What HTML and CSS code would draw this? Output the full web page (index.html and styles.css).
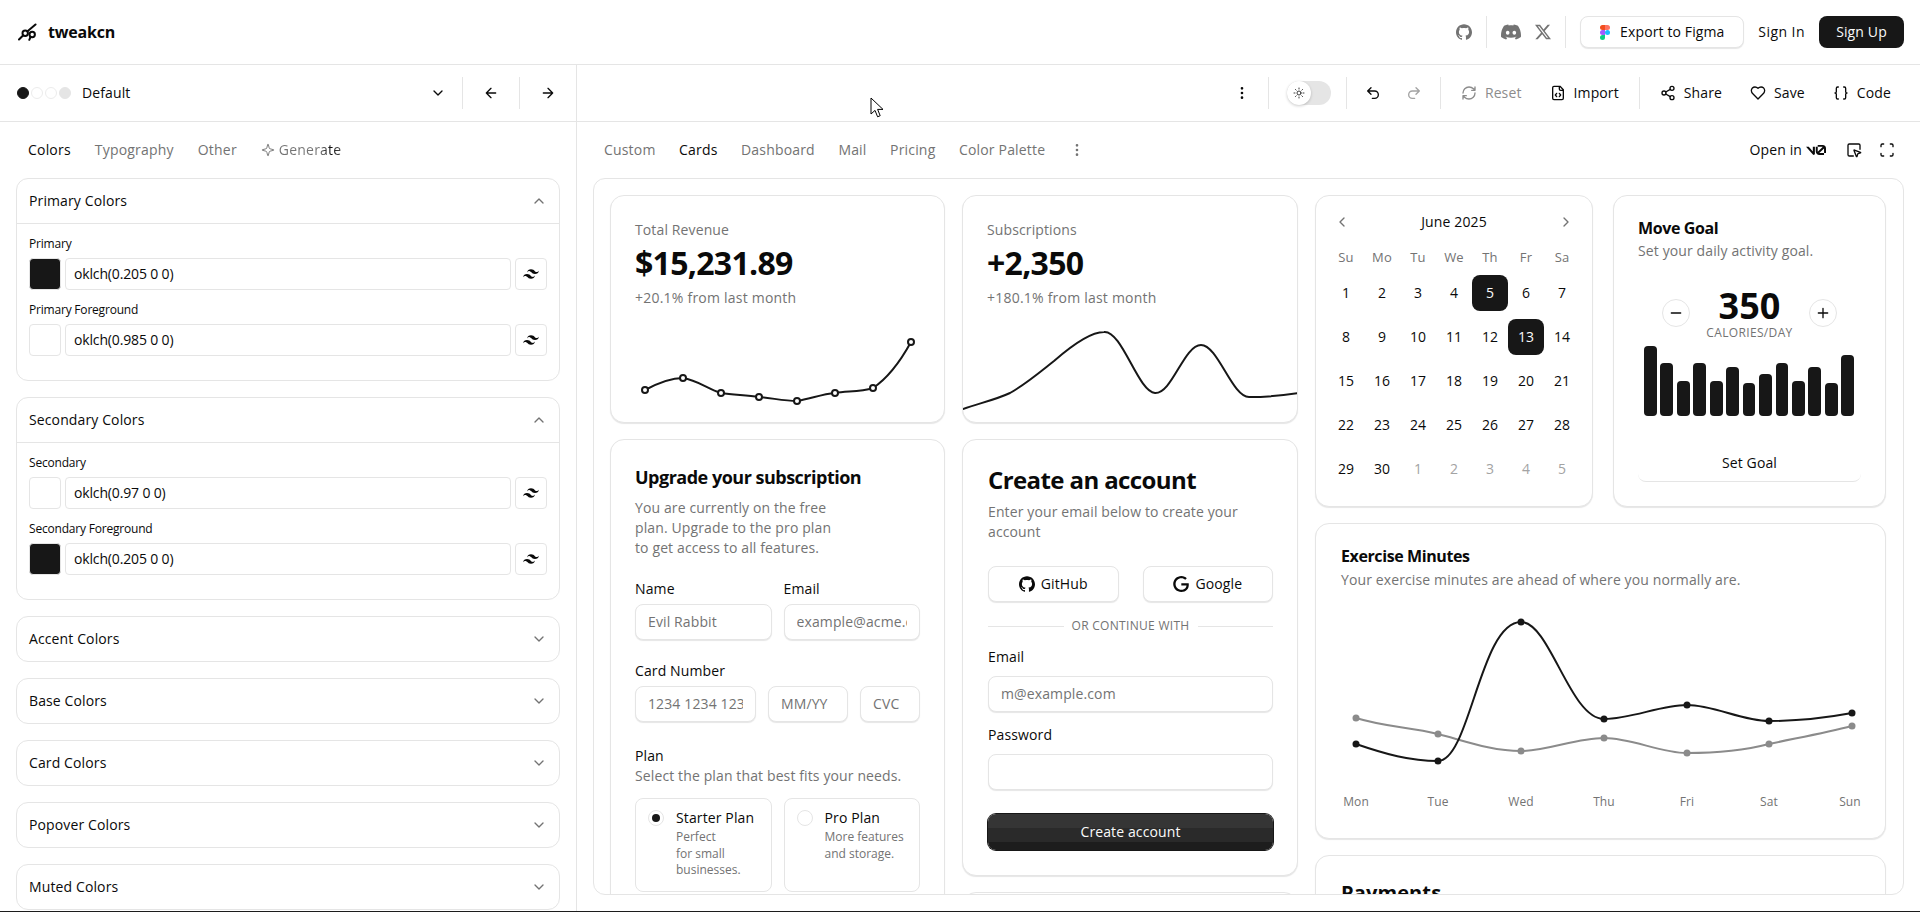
FILE: index.html
```html
<!DOCTYPE html>
<html lang="en">
<head>
    <meta charset="UTF-8">
    <meta name="viewport" content="width=device-width, initial-scale=1.0">
    <title>tweakcn</title>
    <link rel="stylesheet" href="styles.css">
</head>
<body>
    <!-- shared icons -->
    <svg class="icon-defs" aria-hidden="true">
        <symbol id="i-down" viewBox="0 0 24 24"><path d="m6 9 6 6 6-6"/></symbol>
        <symbol id="i-up" viewBox="0 0 24 24"><path d="m18 15-6-6-6 6"/></symbol>
        <symbol id="i-left" viewBox="0 0 24 24"><path d="m15 18-6-6 6-6"/></symbol>
        <symbol id="i-right" viewBox="0 0 24 24"><path d="m9 18 6-6-6-6"/></symbol>
        <symbol id="i-dots" viewBox="0 0 24 24"><circle cx="12" cy="5" r="1"/><circle cx="12" cy="12" r="1"/><circle cx="12" cy="19" r="1"/></symbol>
        <symbol id="i-tailwind" viewBox="0 0 24 24"><path class="solid" d="M12 4.8c-3.2 0-5.2 1.6-6 4.8 1.2-1.6 2.6-2.2 4.2-1.8.913.228 1.565.89 2.288 1.624C13.666 10.618 15.027 12 18 12c3.2 0 5.2-1.6 6-4.8-1.2 1.6-2.6 2.2-4.2 1.8-.913-.228-1.565-.89-2.288-1.624C16.337 6.182 14.976 4.8 12 4.8zM6 12c-3.2 0-5.2 1.6-6 4.8 1.2-1.6 2.6-2.2 4.2-1.8.913.228 1.565.89 2.288 1.624C7.666 17.818 9.027 19.2 12 19.2c3.2 0 5.2-1.6 6-4.8-1.2 1.6-2.6 2.2-4.2 1.8-.913-.228-1.565-.89-2.288-1.624C10.337 13.382 8.976 12 6 12z"/></symbol>
        <symbol id="i-github" viewBox="0 0 24 24"><path class="solid" d="M12 .297c-6.63 0-12 5.373-12 12 0 5.303 3.438 9.8 8.205 11.385.6.113.82-.258.82-.577 0-.285-.01-1.04-.015-2.04-3.338.724-4.042-1.61-4.042-1.61C4.422 18.07 3.633 17.7 3.633 17.7c-1.087-.744.084-.729.084-.729 1.205.084 1.838 1.236 1.838 1.236 1.07 1.835 2.809 1.305 3.495.998.108-.776.417-1.305.76-1.605-2.665-.3-5.466-1.332-5.466-5.93 0-1.31.465-2.38 1.235-3.22-.135-.303-.54-1.523.105-3.176 0 0 1.005-.322 3.3 1.23.96-.267 1.98-.399 3-.405 1.02.006 2.04.138 3 .405 2.28-1.552 3.285-1.23 3.285-1.23.645 1.653.24 2.873.12 3.176.765.84 1.23 1.91 1.23 3.22 0 4.61-2.805 5.625-5.475 5.92.42.36.81 1.096.81 2.22 0 1.606-.015 2.896-.015 3.286 0 .315.21.69.825.57C20.565 22.092 24 17.592 24 12.297c0-6.627-5.373-12-12-12"/></symbol>
    </svg>

    <header class="site-header">
        <a class="brand">
            <svg class="brand-mark" width="20" height="18" viewBox="0 0 20 18"><path d="M17.5 1.5 9.5 8.2M5 12.5 1 16.5M12.5 14l-1.2 2.8"/><circle cx="7.2" cy="10.2" r="2.7"/><circle cx="14.2" cy="11.5" r="2.7"/></svg>
            <span>tweakcn</span>
        </a>
        <div class="header-actions">
            <svg class="social" width="16" height="16"><use href="#i-github"/></svg>
            <span class="divider short"></span>
            <svg class="social discord" width="20" height="20" viewBox="0 0 24 24"><path class="solid" d="M20.317 4.3698a19.7913 19.7913 0 00-4.8851-1.5152.0741.0741 0 00-.0785.0371c-.211.3753-.4447.8648-.6083 1.2495-1.8447-.2762-3.68-.2762-5.4868 0-.1636-.3933-.4058-.8742-.6177-1.2495a.077.077 0 00-.0785-.037 19.7363 19.7363 0 00-4.8852 1.515.0699.0699 0 00-.0321.0277C.5334 9.0458-.319 13.5799.0992 18.0578a.0824.0824 0 00.0312.0561c2.0528 1.5076 4.0413 2.4228 5.9929 3.0294a.0777.0777 0 00.0842-.0276c.4616-.6304.8731-1.2952 1.226-1.9942a.076.076 0 00-.0416-.1057c-.6528-.2476-1.2743-.5495-1.8722-.8923a.077.077 0 01-.0076-.1277c.1258-.0943.2517-.1923.3718-.2914a.0743.0743 0 01.0776-.0105c3.9278 1.7933 8.18 1.7933 12.0614 0a.0739.0739 0 01.0785.0095c.1202.099.246.1981.3728.2924a.077.077 0 01-.0066.1276 12.2986 12.2986 0 01-1.873.8914.0766.0766 0 00-.0407.1067c.3604.698.7719 1.3628 1.225 1.9932a.076.076 0 00.0842.0286c1.961-.6067 3.9495-1.5219 6.0023-3.0294a.077.077 0 00.0313-.0552c.5004-5.177-.8382-9.6739-3.5485-13.6604a.061.061 0 00-.0312-.0286zM8.02 15.3312c-1.1825 0-2.1569-1.0857-2.1569-2.419 0-1.3332.9555-2.4189 2.157-2.4189 1.2108 0 2.1757 1.0952 2.1568 2.419 0 1.3332-.9555 2.4189-2.1569 2.4189zm7.9748 0c-1.1825 0-2.1569-1.0857-2.1569-2.419 0-1.3332.9554-2.4189 2.1569-2.4189 1.2108 0 2.1757 1.0952 2.1568 2.419 0 1.3332-.946 2.4189-2.1568 2.4189Z"/></svg>
            <svg class="social x-logo" width="16" height="16" viewBox="0 0 24 24"><path class="solid" d="M18.901 1.153h3.68l-8.04 9.19L24 22.846h-7.406l-5.8-7.584-6.638 7.584H.474l8.6-9.83L0 1.154h7.594l5.243 6.932ZM17.61 20.644h2.039L6.486 3.24H4.298Z"/></svg>
            <span class="divider short"></span>
            <button class="figma-btn">
                <svg width="10" height="15" viewBox="0 0 38 57"><path fill="#1ABCFE" d="M19 28.5a9.5 9.5 0 1 1 19 0 9.5 9.5 0 0 1-19 0z"/><path fill="#0ACF83" d="M0 47.5A9.5 9.5 0 0 1 9.5 38H19v9.5a9.5 9.5 0 1 1-19 0z"/><path fill="#FF7262" d="M19 0v19h9.5a9.5 9.5 0 1 0 0-19H19z"/><path fill="#F24E1E" d="M0 9.5A9.5 9.5 0 0 0 9.5 19H19V0H9.5A9.5 9.5 0 0 0 0 9.5z"/><path fill="#A259FF" d="M0 28.5A9.5 9.5 0 0 0 9.5 38H19V19H9.5A9.5 9.5 0 0 0 0 28.5z"/></svg>
                Export to Figma
            </button>
            <a class="sign-in">Sign In</a>
            <button class="sign-up">Sign Up</button>
        </div>
    </header>

    <div class="workspace">
        <aside class="sidebar">
            <div class="theme-bar">
                <div class="theme-dots"><i class="dot dark"></i><i class="dot"></i><i class="dot"></i><i class="dot grey"></i></div>
                <span class="theme-name">Default</span>
                <svg class="ico theme-chevron" width="16" height="16"><use href="#i-down"/></svg>
                <span class="divider"></span>
                <svg class="ico theme-arrow" width="16" height="16" viewBox="0 0 24 24"><path d="m12 19-7-7 7-7M19 12H5"/></svg>
                <span class="divider"></span>
                <svg class="ico theme-arrow" width="16" height="16" viewBox="0 0 24 24"><path d="M5 12h14M12 5l7 7-7 7"/></svg>
            </div>

            <nav class="side-tabs">
                <a class="active">Colors</a>
                <a>Typography</a>
                <a>Other</a>
                <a class="generate">
                    <svg class="ico thin" width="14" height="14" viewBox="0 0 24 24"><path d="M9.937 15.5A2 2 0 0 0 8.5 14.063l-6.135-1.582a.5.5 0 0 1 0-.962L8.5 9.936A2 2 0 0 0 9.937 8.5l1.582-6.135a.5.5 0 0 1 .963 0L14.063 8.5A2 2 0 0 0 15.5 9.937l6.135 1.581a.5.5 0 0 1 0 .964L15.5 14.063a2 2 0 0 0-1.437 1.437l-1.582 6.135a.5.5 0 0 1-.963 0z"/></svg>
                    <span>Generate</span>
                </a>
            </nav>

            <div class="color-groups">
                <section class="color-group">
                    <div class="group-head">Primary Colors<svg class="ico" width="16" height="16"><use href="#i-up"/></svg></div>
                    <div class="group-body">
                        <div class="color-field">
                            <label>Primary</label>
                            <div class="color-row">
                                <span class="swatch dark"></span>
                                <input class="color-input" value="oklch(0.205 0 0)">
                                <button class="tw-btn"><svg width="16" height="16"><use href="#i-tailwind"/></svg></button>
                            </div>
                        </div>
                        <div class="color-field">
                            <label>Primary Foreground</label>
                            <div class="color-row">
                                <span class="swatch"></span>
                                <input class="color-input" value="oklch(0.985 0 0)">
                                <button class="tw-btn"><svg width="16" height="16"><use href="#i-tailwind"/></svg></button>
                            </div>
                        </div>
                    </div>
                </section>
                <section class="color-group">
                    <div class="group-head">Secondary Colors<svg class="ico" width="16" height="16"><use href="#i-up"/></svg></div>
                    <div class="group-body">
                        <div class="color-field">
                            <label>Secondary</label>
                            <div class="color-row">
                                <span class="swatch"></span>
                                <input class="color-input" value="oklch(0.97 0 0)">
                                <button class="tw-btn"><svg width="16" height="16"><use href="#i-tailwind"/></svg></button>
                            </div>
                        </div>
                        <div class="color-field">
                            <label>Secondary Foreground</label>
                            <div class="color-row">
                                <span class="swatch dark"></span>
                                <input class="color-input" value="oklch(0.205 0 0)">
                                <button class="tw-btn"><svg width="16" height="16"><use href="#i-tailwind"/></svg></button>
                            </div>
                        </div>
                    </div>
                </section>
                <section class="color-group"><div class="group-head">Accent Colors<svg class="ico" width="16" height="16"><use href="#i-down"/></svg></div></section>
                <section class="color-group"><div class="group-head">Base Colors<svg class="ico" width="16" height="16"><use href="#i-down"/></svg></div></section>
                <section class="color-group"><div class="group-head">Card Colors<svg class="ico" width="16" height="16"><use href="#i-down"/></svg></div></section>
                <section class="color-group"><div class="group-head">Popover Colors<svg class="ico" width="16" height="16"><use href="#i-down"/></svg></div></section>
                <section class="color-group"><div class="group-head">Muted Colors<svg class="ico" width="16" height="16"><use href="#i-down"/></svg></div></section>
            </div>
        </aside>

        <main class="editor">
            <div class="action-bar">
                <svg class="ico" width="16" height="16"><use href="#i-dots"/></svg>
                <span class="divider"></span>
                <div class="mode-toggle">
                    <span class="knob">
                        <svg class="ico thin" width="12" height="12" viewBox="0 0 24 24"><circle cx="12" cy="12" r="4"/><path d="M12 2v2M12 20v2M4.9 4.9l1.4 1.4M17.7 17.7l1.4 1.4M2 12h2M20 12h2M6.3 17.7l-1.4 1.4M19.1 4.9l-1.4 1.4"/></svg>
                    </span>
                </div>
                <span class="divider"></span>
                <svg class="ico undo" width="16" height="16" viewBox="0 0 24 24"><path d="M9 14 4 9l5-5M4 9h10.5a5.5 5.5 0 0 1 0 11H11"/></svg>
                <svg class="ico redo" width="16" height="16" viewBox="0 0 24 24"><path d="m15 14 5-5-5-5M20 9H9.5a5.5 5.5 0 0 0 0 11H13"/></svg>
                <span class="divider"></span>
                <a class="action disabled"><svg class="ico" width="16" height="16" viewBox="0 0 24 24"><path d="M3 12a9 9 0 0 1 9-9 9.75 9.75 0 0 1 6.74 2.74L21 8M21 3v5h-5M21 12a9 9 0 0 1-9 9 9.75 9.75 0 0 1-6.74-2.74L3 16M8 16H3v5"/></svg>Reset</a>
                <a class="action"><svg class="ico" width="16" height="16" viewBox="0 0 24 24"><path d="M10 12.5 8 15l2 2.5M14 12.5l2 2.5-2 2.5M14 2v4a2 2 0 0 0 2 2h4M15 2H6a2 2 0 0 0-2 2v16a2 2 0 0 0 2 2h12a2 2 0 0 0 2-2V7z"/></svg>Import</a>
                <span class="divider"></span>
                <a class="action"><svg class="ico" width="16" height="16" viewBox="0 0 24 24"><circle cx="18" cy="5" r="3"/><circle cx="6" cy="12" r="3"/><circle cx="18" cy="19" r="3"/><path d="m8.59 13.51 6.83 3.98M15.41 6.51l-6.82 3.98"/></svg>Share</a>
                <a class="action"><svg class="ico" width="16" height="16" viewBox="0 0 24 24"><path d="M19 14c1.49-1.46 3-3.21 3-5.5A5.5 5.5 0 0 0 16.5 3c-1.76 0-3 .5-4.5 2-1.5-1.5-2.74-2-4.5-2A5.5 5.5 0 0 0 2 8.5c0 2.3 1.5 4.05 3 5.5l7 7Z"/></svg>Save</a>
                <a class="action"><svg class="ico" width="16" height="16" viewBox="0 0 24 24"><path d="M8 3H7a2 2 0 0 0-2 2v5a2 2 0 0 1-2 2 2 2 0 0 1 2 2v5c0 1.1.9 2 2 2h1M16 21h1a2 2 0 0 0 2-2v-5c0-1.1.9-2 2-2a2 2 0 0 1-2-2V5a2 2 0 0 0-2-2h-1"/></svg>Code</a>
            </div>

            <div class="preview-tabs">
                <nav class="tab-list">
                    <a>Custom</a>
                    <a class="active">Cards</a>
                    <a>Dashboard</a>
                    <a>Mail</a>
                    <a>Pricing</a>
                    <a>Color Palette</a>
                    <svg class="ico" width="16" height="16"><use href="#i-dots"/></svg>
                </nav>
                <div class="tab-tools">
                    <a class="open-in">Open in
                        <svg width="20" height="20" viewBox="0 0 24 24"><path class="solid" d="M14.066 6.028v2.22h5.729q.075-.001.148.005l-5.853 5.752a2 2 0 0 1-.024-.309V8.247h-2.353v5.45c0 2.322 1.935 4.222 4.258 4.222h5.675v-2.22h-5.675q-.03 0-.059-.003l5.729-5.629q.006.082.006.166v5.465H24v-5.465a4.204 4.204 0 0 0-4.205-4.205zM0 8.245l8.28 9.266c.839.94 2.396.346 2.396-.914V8.245H8.19v5.44l-4.86-5.44Z"/></svg>
                    </a>
                    <svg class="ico" width="16" height="16" viewBox="0 0 24 24"><path d="M12.034 12.681a.498.498 0 0 1 .647-.647l9 3.5a.5.5 0 0 1-.033.943l-3.444 1.068a1 1 0 0 0-.66.66l-1.067 3.443a.5.5 0 0 1-.943.033zM21 11V5a2 2 0 0 0-2-2H5a2 2 0 0 0-2 2v14a2 2 0 0 0 2 2h6"/></svg>
                    <svg class="ico" width="16" height="16" viewBox="0 0 24 24"><path d="M3 7V5a2 2 0 0 1 2-2h2M17 3h2a2 2 0 0 1 2 2v2M21 17v2a2 2 0 0 1-2 2h-2M7 21H5a2 2 0 0 1-2-2v-2"/></svg>
                </div>
            </div>

            <div class="preview">
                <div class="preview-grid">
                    <div class="stack">
                        <div class="card stat-card">
                            <div class="stat-text">
                                <p class="stat-label">Total Revenue</p>
                                <p class="stat-value">$15,231.89</p>
                                <p class="stat-note">+20.1% from last month</p>
                            </div>
                            <svg class="stat-chart" viewBox="611 330 333 92">
                                <path class="line" d="M645 390C658 383 670 378 683 378C697 380 708 389 721 393C734 395 746 395 759 397C772 398 784 401 797 401C810 399 822 394 835 393C848 391 860 392 873 388C888 378 900 362 911 342"/>
                                <g class="ring"><circle cx="645" cy="390" r="3"/><circle cx="683" cy="378" r="3"/><circle cx="721" cy="393" r="3"/><circle cx="759" cy="397" r="3"/><circle cx="797" cy="401" r="3"/><circle cx="835" cy="393" r="3"/><circle cx="873" cy="388" r="3"/><circle cx="911" cy="342" r="3"/></g>
                            </svg>
                        </div>
                        <div class="card upgrade-card">
                            <h2 class="upgrade-title">Upgrade your subscription</h2>
                            <p class="upgrade-desc">You are currently on the free<br>plan. Upgrade to the pro plan<br>to get access to all features.</p>
                            <div class="two-cols">
                                <div class="field"><label>Name</label><input class="text-input" placeholder="Evil Rabbit"></div>
                                <div class="field"><label>Email</label><input class="text-input" placeholder="example@acme.com"></div>
                            </div>
                            <div class="field card-field">
                                <label>Card Number</label>
                                <div class="card-inputs">
                                    <input class="text-input" placeholder="1234 1234 1234 1234">
                                    <input class="text-input" placeholder="MM/YY">
                                    <input class="text-input" placeholder="CVC">
                                </div>
                            </div>
                            <div class="plan-head">
                                <p class="plan-title">Plan</p>
                                <p class="plan-sub">Select the plan that best fits your needs.</p>
                            </div>
                            <div class="two-cols plans">
                                <div class="plan-option">
                                    <span class="radio checked"></span>
                                    <div><p class="plan-name">Starter Plan</p><p class="plan-info">Perfect<br>for small<br>businesses.</p></div>
                                </div>
                                <div class="plan-option">
                                    <span class="radio"></span>
                                    <div><p class="plan-name">Pro Plan</p><p class="plan-info">More features<br>and storage.</p></div>
                                </div>
                            </div>
                        </div>
                    </div>

                    <div class="stack">
                        <div class="card stat-card">
                            <div class="stat-text">
                                <p class="stat-label">Subscriptions</p>
                                <p class="stat-value">+2,350</p>
                                <p class="stat-note">+180.1% from last month</p>
                            </div>
                            <svg class="stat-chart" viewBox="963 330 334 92">
                                <path class="line" d="M963 409C980 403 995 400 1010 393C1026 384 1040 372 1054 361C1070 347 1090 332 1104 332C1122 330 1138 392 1155 393C1172 394 1184 345 1201 345C1218 345 1232 397 1249 397C1265 397 1280 396 1298 393"/>
                            </svg>
                        </div>
                        <div class="card account-card">
                            <h2 class="account-title">Create an account</h2>
                            <p class="account-desc">Enter your email below to create your account</p>
                            <div class="two-cols oauth">
                                <button class="outline-btn"><svg width="16" height="16"><use href="#i-github"/></svg>GitHub</button>
                                <button class="outline-btn"><svg width="16" height="16" viewBox="0 0 24 24"><path class="solid" d="M12.48 10.92v3.28h7.84c-.24 1.84-.853 3.187-1.787 4.133-1.147 1.147-2.933 2.4-6.053 2.4-4.827 0-8.6-3.893-8.6-8.72s3.773-8.72 8.6-8.72c2.6 0 4.507 1.027 5.907 2.347l2.307-2.307C18.747 1.44 16.133 0 12.48 0 5.867 0 .307 5.387.307 12s5.56 12 12.173 12c3.573 0 6.267-1.173 8.373-3.36 2.16-2.16 2.84-5.213 2.84-7.667 0-.76-.053-1.467-.173-2.053H12.48z"/></svg>Google</button>
                            </div>
                            <div class="or-line"><span>Or continue with</span></div>
                            <div class="field"><label>Email</label><input class="text-input" placeholder="m@example.com"></div>
                            <div class="field password-field"><label>Password</label><input class="text-input" type="password"></div>
                            <button class="create-btn">Create account</button>
                        </div>
                        <div class="card next-card"></div>
                    </div>

                    <div class="right-col">
                        <div class="right-top">
                            <div class="card calendar-card">
                                <div class="cal-head">
                                    <svg class="ico muted" width="16" height="16"><use href="#i-left"/></svg>
                                    <span>June 2025</span>
                                    <svg class="ico muted" width="16" height="16"><use href="#i-right"/></svg>
                                </div>
                                <div class="cal-grid">
                                    <span class="wd">Su</span><span class="wd">Mo</span><span class="wd">Tu</span><span class="wd">We</span><span class="wd">Th</span><span class="wd">Fr</span><span class="wd">Sa</span>
                                    <span>1</span><span>2</span><span>3</span><span>4</span><span class="sel">5</span><span>6</span><span>7</span>
                                    <span>8</span><span>9</span><span>10</span><span>11</span><span>12</span><span class="sel">13</span><span>14</span>
                                    <span>15</span><span>16</span><span>17</span><span>18</span><span>19</span><span>20</span><span>21</span>
                                    <span>22</span><span>23</span><span>24</span><span>25</span><span>26</span><span>27</span><span>28</span>
                                    <span>29</span><span>30</span><span class="off">1</span><span class="off">2</span><span class="off">3</span><span class="off">4</span><span class="off">5</span>
                                </div>
                            </div>
                            <div class="card goal-card">
                                <h3 class="card-title">Move Goal</h3>
                                <p class="card-desc">Set your daily activity goal.</p>
                                <div class="goal-counter">
                                    <button class="round-btn"><svg class="ico" width="16" height="16" viewBox="0 0 24 24"><path d="M5 12h14"/></svg></button>
                                    <div class="goal-value"><strong>350</strong><span>CALORIES/DAY</span></div>
                                    <button class="round-btn"><svg class="ico" width="16" height="16" viewBox="0 0 24 24"><path d="M5 12h14M12 5v14"/></svg></button>
                                </div>
                                <div class="goal-bars">
                                    <i style="height:70px"></i><i style="height:53px"></i><i style="height:35px"></i><i style="height:53px"></i><i style="height:35px"></i><i style="height:49px"></i><i style="height:33px"></i><i style="height:42px"></i><i style="height:53px"></i><i style="height:35px"></i><i style="height:49px"></i><i style="height:33px"></i><i style="height:61px"></i>
                                </div>
                                <button class="goal-btn">Set Goal</button>
                            </div>
                        </div>
                        <div class="card exercise-card">
                            <h3 class="card-title">Exercise Minutes</h3>
                            <p class="card-desc">Your exercise minutes are ahead of where you normally are.</p>
                            <svg class="exercise-chart" viewBox="1316 600 569 215">
                                <path class="line grey" d="M1356 718C1385 727 1410 727 1438 734C1465 741 1492 751 1521 751C1548 751 1576 738 1604 738C1632 738 1660 753 1687 753C1714 753 1742 751 1769 744C1797 738 1825 733 1852 726"/>
                                <g class="pts grey"><circle cx="1356" cy="718" r="3.5"/><circle cx="1438" cy="734" r="3.5"/><circle cx="1521" cy="751" r="3.5"/><circle cx="1604" cy="738" r="3.5"/><circle cx="1687" cy="753" r="3.5"/><circle cx="1769" cy="744" r="3.5"/><circle cx="1852" cy="726" r="3.5"/></g>
                                <path class="line" d="M1356 744C1385 754 1410 761 1438 761C1470 761 1480 622 1521 622C1550 622 1570 719 1604 719C1632 719 1660 705 1687 705C1714 705 1742 721 1769 721C1797 721 1825 718 1852 713"/>
                                <g class="pts"><circle cx="1356" cy="744" r="3.5"/><circle cx="1438" cy="761" r="3.5"/><circle cx="1521" cy="622" r="3.5"/><circle cx="1604" cy="719" r="3.5"/><circle cx="1687" cy="705" r="3.5"/><circle cx="1769" cy="721" r="3.5"/><circle cx="1852" cy="713" r="3.5"/></g>
                                <g class="axis"><text x="1356" y="806">Mon</text><text x="1438" y="806">Tue</text><text x="1521" y="806">Wed</text><text x="1604" y="806">Thu</text><text x="1687" y="806">Fri</text><text x="1769" y="806">Sat</text><text x="1850" y="806">Sun</text></g>
                            </svg>
                        </div>
                        <div class="card payments-card">
                            <h3 class="payments-title">Payments</h3>
                        </div>
                    </div>
                </div>
            </div>
        </main>
    </div>
    <div class="bottom-edge"></div>

    <svg class="cursor" width="14" height="22" viewBox="0 0 14 22"><path d="M1 1v16l4-3.6 2.6 6.4 2.6-1.1L7.6 12.4H13z"/></svg>
</body>
</html>
```

FILE: styles.css
```css
* {
    box-sizing: border-box;
}

html, body {
    height: 100%;
}

body {
    margin: 0;
    overflow: hidden;
    background: #fff;
    color: #0a0a0a;
    font-family: "Open Sans", "Noto Sans", sans-serif;
    font-size: 14px;
    line-height: 20px;
    letter-spacing: 0.12px;
}

p, h2, h3 {
    margin: 0;
}

button, input {
    font: inherit;
    letter-spacing: inherit;
    color: inherit;
}

.icon-defs {
    display: none;
}

.ico {
    flex: none;
    fill: none;
    stroke: currentColor;
    stroke-width: 2;
    stroke-linecap: round;
    stroke-linejoin: round;
}

.ico.thin {
    stroke-width: 1.6;
}

.ico.muted {
    color: #737373;
}

.solid {
    fill: currentColor;
    stroke: none;
}

.divider {
    flex: none;
    width: 1px;
    height: 32px;
    background: #e5e5e5;
}

/* top header */
.site-header {
    height: 65px;
    display: flex;
    align-items: center;
    justify-content: space-between;
    padding: 0 16px 0 18px;
    border-bottom: 1px solid #e5e5e5;
}

.brand {
    display: flex;
    align-items: center;
    gap: 10px;
    font-size: 16px;
    font-weight: 700;
    letter-spacing: -0.2px;
}

.brand-mark {
    fill: none;
    stroke: #0a0a0a;
    stroke-width: 2;
    stroke-linecap: round;
}

.header-actions {
    display: flex;
    align-items: center;
}

.social {
    color: #737373;
}

.divider.short {
    margin: 0 14px;
}

.discord {
    margin-right: 14px;
}

.figma-btn {
    width: 164px;
    height: 32px;
    display: flex;
    align-items: center;
    justify-content: center;
    gap: 10px;
    background: #fff;
    border: 1px solid #e5e5e5;
    border-radius: 8px;
    box-shadow: 0 1px 1px rgba(0,0,0,0.1);
    font-weight: 500;
}

.sign-in {
    margin: 0 14px;
    font-weight: 500;
    letter-spacing: 0.45px;
}

.sign-up {
    width: 85px;
    height: 32px;
    background: #171717;
    color: #fafafa;
    border: none;
    border-radius: 8px;
    font-weight: 500;
}

/* main split */
.workspace {
    height: 846px;
    display: flex;
}

.sidebar {
    width: 577px;
    flex: none;
    border-right: 1px solid #e5e5e5;
    overflow: hidden;
}

.theme-bar {
    height: 57px;
    display: flex;
    align-items: center;
    padding: 0 20px 0 17px;
    border-bottom: 1px solid #e5e5e5;
}

.theme-dots {
    display: flex;
    gap: 2px;
}

.dot {
    width: 12px;
    height: 12px;
    border-radius: 50%;
    border: 1px solid #ececec;
    background: #fff;
}

.dot.dark {
    background: #171717;
    border-color: #171717;
}

.dot.grey {
    background: #e5e5e5;
    border-color: #e5e5e5;
}

.theme-name {
    flex: 1;
    margin-left: 11px;
    font-weight: 500;
}

.theme-chevron {
    margin-right: 16px;
}

.theme-arrow {
    margin: 0 20px;
}

.theme-arrow:last-child {
    margin-right: 0;
}

.side-tabs {
    height: 56px;
    display: flex;
    align-items: center;
    gap: 24px;
    padding-left: 28px;
    color: #737373;
    font-weight: 500;
    letter-spacing: 0.2px;
}

.side-tabs .active {
    color: #0a0a0a;
}

.generate {
    display: flex;
    align-items: center;
    gap: 4px;
}

.generate span {
    background: linear-gradient(90deg, #737373 66%, #0a0a0a 84%, #525252);
    -webkit-background-clip: text;
    background-clip: text;
    color: transparent;
}

.color-groups {
    display: flex;
    flex-direction: column;
    gap: 16px;
    padding: 0 16px;
}

.color-group {
    border: 1px solid #e5e5e5;
    border-radius: 12px;
}

.group-head {
    height: 44px;
    display: flex;
    align-items: center;
    justify-content: space-between;
    padding: 0 12px;
    font-weight: 500;
}

.group-head .ico {
    color: #737373;
}

.group-body {
    border-top: 1px solid #e5e5e5;
    padding: 12px 12px 24px;
    display: flex;
    flex-direction: column;
    gap: 12px;
}

.color-field label {
    display: block;
    font-size: 12px;
    line-height: 16px;
    margin-bottom: 6px;
    letter-spacing: -0.2px;
}

.color-row {
    display: flex;
    gap: 4px;
    height: 32px;
}

.swatch {
    width: 32px;
    flex: none;
    border: 1px solid #e5e5e5;
    border-radius: 4px;
}

.swatch.dark {
    background: #171717;
}

.color-input {
    flex: 1;
    min-width: 0;
    padding: 0 8px;
    border: 1px solid #e5e5e5;
    border-radius: 4px;
    letter-spacing: -0.15px;
}

.tw-btn {
    width: 32px;
    flex: none;
    display: flex;
    align-items: center;
    justify-content: center;
    padding: 0;
    background: #fff;
    border: 1px solid #e5e5e5;
    border-radius: 4px;
}

/* right side */
.editor {
    flex: 1;
    min-width: 0;
    display: flex;
    flex-direction: column;
}

.action-bar {
    height: 57px;
    flex: none;
    display: flex;
    align-items: center;
    justify-content: flex-end;
    padding-right: 29px;
    border-bottom: 1px solid #e5e5e5;
    font-weight: 500;
}

.action-bar .divider {
    margin: 0 18px;
}

.action-bar .action + .divider {
    margin-left: 20px;
}

.mode-toggle {
    width: 44px;
    height: 24px;
    border-radius: 12px;
    background: #e5e5e5;
    display: flex;
    margin-right: -3px;
}

.knob {
    width: 24px;
    height: 24px;
    border-radius: 50%;
    background: #fff;
    box-shadow: 0 1px 3px rgba(0,0,0,0.2);
    display: flex;
    align-items: center;
    justify-content: center;
}

.undo {
    margin-right: 25px;
}

.redo {
    color: #a3a3a3;
}

.action {
    display: flex;
    align-items: center;
    gap: 8px;
    margin-left: 28px;
}

.divider + .action {
    margin-left: 2px;
}

.action.disabled {
    color: #8c8c8c;
}

.preview-tabs {
    height: 56px;
    flex: none;
    display: flex;
    align-items: center;
    justify-content: space-between;
    padding: 0 25px 0 27px;
    font-weight: 500;
}

.tab-list {
    display: flex;
    align-items: center;
    gap: 23.5px;
    color: #737373;
    letter-spacing: 0.18px;
}

.tab-list .active {
    color: #0a0a0a;
}

.tab-tools {
    display: flex;
    align-items: center;
    gap: 17px;
}

.open-in {
    display: flex;
    align-items: center;
    gap: 4px;
    margin-right: 3px;
}

.preview {
    flex: none;
    height: 717px;
    margin: 0 16px;
    padding: 16px;
    border: 1px solid #e5e5e5;
    border-radius: 12px;
    overflow: hidden;
}

.preview-grid {
    display: grid;
    grid-template-columns: 335px 336px 571px;
    column-gap: 17px;
    align-items: start;
}

.stack, .right-col {
    display: flex;
    flex-direction: column;
    gap: 16px;
}

.card {
    background: #fff;
    border: 1px solid #e5e5e5;
    border-radius: 14px;
    box-shadow: 0 1px 1px rgba(0,0,0,0.1);
}

.line {
    fill: none;
    stroke: #171717;
    stroke-width: 2;
    stroke-linecap: round;
}

.line.grey {
    stroke: #8b8b8b;
}

/* stat cards */
.stat-card {
    height: 228px;
    display: flex;
    flex-direction: column;
    overflow: hidden;
}

.stat-text {
    padding: 24px 24px 0;
    height: 134px;
}

.stat-label, .stat-note {
    color: #737373;
}

.stat-note {
    letter-spacing: 0.22px;
}

.stat-value {
    font-size: 32px;
    line-height: 36px;
    font-weight: 700;
    letter-spacing: -0.7px;
    margin: 5px 0 7px;
}

.stat-chart {
    display: block;
    width: 100%;
    height: 92px;
}

.ring circle {
    fill: #fff;
    stroke: #171717;
    stroke-width: 2;
}

/* upgrade form */
.upgrade-card {
    height: 560px;
    padding: 23px 24px;
}

.upgrade-title {
    font-size: 18px;
    line-height: 28px;
    font-weight: 700;
    letter-spacing: -0.5px;
}

.upgrade-desc {
    color: #737373;
    margin: 7px 0 21px;
}

.two-cols {
    display: grid;
    grid-template-columns: 1fr 1fr;
    gap: 12px;
}

.field label {
    display: block;
    margin-bottom: 5px;
    font-weight: 500;
}

.text-input {
    display: block;
    width: 100%;
    height: 36px;
    padding: 0 12px 2px;
    background: #fff;
    border: 1px solid #e5e5e5;
    border-radius: 8px;
    box-shadow: 0 1px 1px rgba(0,0,0,0.1);
}

.text-input::placeholder {
    color: #737373;
}

.card-field {
    margin-top: 21px;
}

.card-inputs {
    display: grid;
    grid-template-columns: 1fr 80px 60px;
    gap: 12px;
}

.plan-head {
    margin: 24px 0 12px;
}

.plan-title, .plan-name {
    font-weight: 500;
}

.plan-sub {
    color: #737373;
}

.plan-option {
    height: 94px;
    display: flex;
    gap: 12px;
    padding: 9px 12px;
    border: 1px solid #e5e5e5;
    border-radius: 8px;
}

.radio {
    flex: none;
    width: 16px;
    height: 16px;
    margin-top: 2px;
    border: 1px solid #e5e5e5;
    border-radius: 50%;
    display: flex;
    align-items: center;
    justify-content: center;
}

.radio.checked::after {
    content: "";
    width: 8px;
    height: 8px;
    border-radius: 50%;
    background: #171717;
}

.plan-info {
    font-size: 12px;
    line-height: 16.5px;
    color: #737373;
    margin-top: 1px;
    letter-spacing: 0;
}

/* sign up form */
.account-card {
    height: 437px;
    padding: 24px 24px 0 25px;
}

.account-title {
    font-size: 24px;
    line-height: 32px;
    font-weight: 700;
    letter-spacing: -0.6px;
}

.account-desc {
    color: #737373;
    margin-top: 6px;
}

.oauth {
    gap: 24px;
    margin-top: 24px;
}

.outline-btn {
    height: 36px;
    display: flex;
    align-items: center;
    justify-content: center;
    gap: 6px;
    background: #fff;
    border: 1px solid #e5e5e5;
    border-radius: 8px;
    box-shadow: 0 1px 1px rgba(0,0,0,0.1);
    font-weight: 500;
}

.or-line {
    display: flex;
    align-items: center;
    gap: 8px;
    margin: 16px 0 13px;
    font-size: 12px;
    line-height: 16px;
    color: #737373;
    text-transform: uppercase;
    letter-spacing: 0.3px;
}

.or-line::before, .or-line::after {
    content: "";
    flex: 1;
    height: 1px;
    background: #e5e5e5;
}

.account-card .field label {
    margin-bottom: 9px;
}

.password-field {
    margin-top: 13px;
}

.create-btn {
    display: block;
    width: 100%;
    height: 36px;
    margin-top: 24px;
    color: #fafafa;
    border: none;
    border-radius: 8px;
    background: linear-gradient(#353535 0, #353535 39%, #2a2a2a 39%, #2a2a2a 78%, #1d1d1d 78%);
    box-shadow: 0 0 0 1px #171717;
    font-weight: 500;
}

.next-card {
    height: 60px;
}

/* calendar */
.right-top {
    display: grid;
    grid-template-columns: 278px 1fr;
    column-gap: 20px;
}

.calendar-card {
    height: 312px;
    padding: 12px;
}

.cal-head {
    height: 28px;
    display: flex;
    align-items: center;
    justify-content: space-between;
    padding: 0 6px;
    margin-bottom: 11px;
}

.cal-grid {
    display: grid;
    grid-template-columns: repeat(7, 36px);
    grid-template-rows: 20px repeat(5, 36px);
    row-gap: 8px;
    justify-content: center;
    text-align: center;
}

.cal-grid span {
    line-height: 36px;
    border-radius: 8px;
}

.cal-grid .wd {
    line-height: 20px;
    color: #737373;
    font-size: 13px;
}

.cal-grid .sel {
    background: #171717;
    color: #fafafa;
}

.cal-grid .off {
    color: #a3a3a3;
}

/* goal */
.goal-card {
    height: 312px;
    padding: 20px 24px 0;
}

.card-title {
    font-size: 16px;
    line-height: 24px;
    font-weight: 700;
    letter-spacing: -0.4px;
}

.card-desc {
    color: #737373;
    margin-top: 1px;
}

.goal-counter {
    display: flex;
    justify-content: space-between;
    align-items: center;
    margin: 25px 24px 0;
}

.round-btn {
    width: 28px;
    height: 28px;
    padding: 0;
    display: flex;
    align-items: center;
    justify-content: center;
    background: #fff;
    border: 1px solid #e5e5e5;
    border-radius: 50%;
}

.goal-value {
    display: flex;
    flex-direction: column;
    align-items: center;
}

.goal-value strong {
    font-size: 36px;
    line-height: 40px;
    font-weight: 700;
}

.goal-value span {
    font-size: 12px;
    line-height: 13px;
    color: #737373;
    letter-spacing: 0.35px;
}

.goal-bars {
    height: 70px;
    display: flex;
    align-items: flex-end;
    gap: 3.7px;
    padding: 0 7px 0 6px;
    margin-top: 7px;
}

.goal-bars i {
    flex: 1;
    background: #171717;
    border-radius: 4px;
}

.goal-btn {
    display: block;
    width: 100%;
    height: 37px;
    margin-top: 29px;
    background: #fff;
    border: none;
    border-bottom: 1px solid #e5e5e5;
    border-radius: 8px;
    font-weight: 500;
}

/* exercise chart */
.exercise-card {
    height: 316px;
    padding: 20px 0 0;
}

.exercise-card .card-title, .exercise-card .card-desc {
    padding: 0 25px;
}

.exercise-card .card-desc {
    margin-top: 2px;
}

.exercise-chart {
    display: block;
    width: 569px;
    height: 215px;
    margin-top: 10px;
}

.axis text {
    font-size: 12px;
    fill: #737373;
    text-anchor: middle;
}

.pts circle {
    fill: #171717;
}

.pts.grey circle {
    fill: #8b8b8b;
}

.payments-card {
    height: 200px;
    padding: 25px 25px;
}

.payments-title {
    font-size: 20px;
    line-height: 24px;
    font-weight: 700;
}

.bottom-edge {
    height: 1px;
    background: #1c1c1c;
}

/* mouse pointer in the capture */
.cursor {
    position: absolute;
    left: 870px;
    top: 97px;
    fill: #fff;
    stroke: #000;
    stroke-width: 1;
}
```
